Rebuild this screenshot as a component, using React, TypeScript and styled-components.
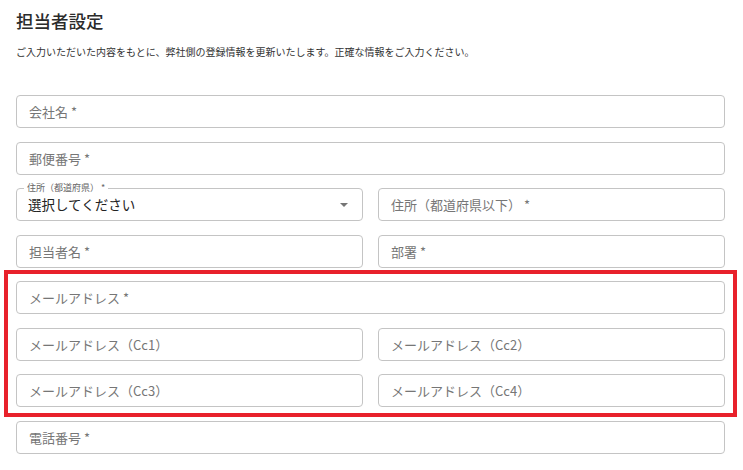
import { createGlobalStyle, styled } from 'styled-components';

const GlobalStyle = createGlobalStyle`
  body {
    margin: 0;
    background: #fff;
    font-family: 'Noto Sans CJK JP', 'Noto Sans', sans-serif;
    color: #333;
  }
`;

const Page = styled.div`
  width: 709px;
  padding: 9px 18px 16px 16px;
`;

const Title = styled.h1`
  margin: 0;
  font-size: 17.5px;
  line-height: 24px;
  font-weight: 500;
  color: #2b2b2b;
`;

const Lead = styled.p`
  margin: 11px 0 0;
  font-size: 10px;
  line-height: 16px;
  color: #333;
`;

const Form = styled.form`
  margin-top: 35px;
  display: flex;
  flex-direction: column;
  gap: 13.5px;
`;

const Row = styled.div`
  display: grid;
  grid-template-columns: 1fr 1fr;
  gap: 15px;
`;

const Highlight = styled.div`
  position: relative;
  display: flex;
  flex-direction: column;
  gap: 13.5px;

  &::after {
    content: '';
    position: absolute;
    inset: -11px -12px -10px -12px;
    border: 4px solid #e8212b;
    pointer-events: none;
  }
`;

const Input = styled.input`
  box-sizing: border-box;
  width: 100%;
  height: 33px;
  margin: 0;
  padding: 0 12px;
  border: 1px solid #c4c4c4;
  border-radius: 4px;
  background: #fff;
  font-family: inherit;
  font-size: 13px;
  color: #222;
  outline: none;

  &::placeholder {
    color: #767676;
  }
`;

const SelectBox = styled.div`
  position: relative;
  box-sizing: border-box;
  height: 33px;
  padding: 0 14px 2px 11px;
  border: 1px solid #c4c4c4;
  border-radius: 4px;
  display: flex;
  align-items: center;
  justify-content: space-between;
`;

const FloatLabel = styled.span`
  position: absolute;
  left: 7px;
  top: -8px;
  padding: 0 3px;
  background: #fff;
  font-size: 9px;
  line-height: 14px;
  color: #666;
`;

const SelectValue = styled.span`
  font-size: 13.5px;
  color: #222;
`;

const Caret = styled.span`
  width: 0;
  height: 0;
  margin-top: 3px;
  border-left: 4px solid transparent;
  border-right: 4px solid transparent;
  border-top: 4px solid #757575;
`;

const App = () => {
  return (
    <>
      <GlobalStyle />
      <Page>
        <Title>担当者設定</Title>
        <Lead>
          ご入力いただいた内容をもとに、弊社側の登録情報を更新いたします。正確な情報をご入力ください。
        </Lead>
        <Form>
          <Input placeholder="会社名 *" />
          <Input placeholder="郵便番号 *" />
          <Row>
            <SelectBox>
              <FloatLabel>住所（都道府県） *</FloatLabel>
              <SelectValue>選択してください</SelectValue>
              <Caret />
            </SelectBox>
            <Input placeholder="住所（都道府県以下） *" />
          </Row>
          <Row>
            <Input placeholder="担当者名 *" />
            <Input placeholder="部署 *" />
          </Row>
          <Highlight>
            <Input placeholder="メールアドレス *" />
            <Row>
              <Input placeholder="メールアドレス（Cc1）" />
              <Input placeholder="メールアドレス（Cc2）" />
            </Row>
            <Row>
              <Input placeholder="メールアドレス（Cc3）" />
              <Input placeholder="メールアドレス（Cc4）" />
            </Row>
          </Highlight>
          <Input placeholder="電話番号 *" />
        </Form>
      </Page>
    </>
  );
};

export default App;
